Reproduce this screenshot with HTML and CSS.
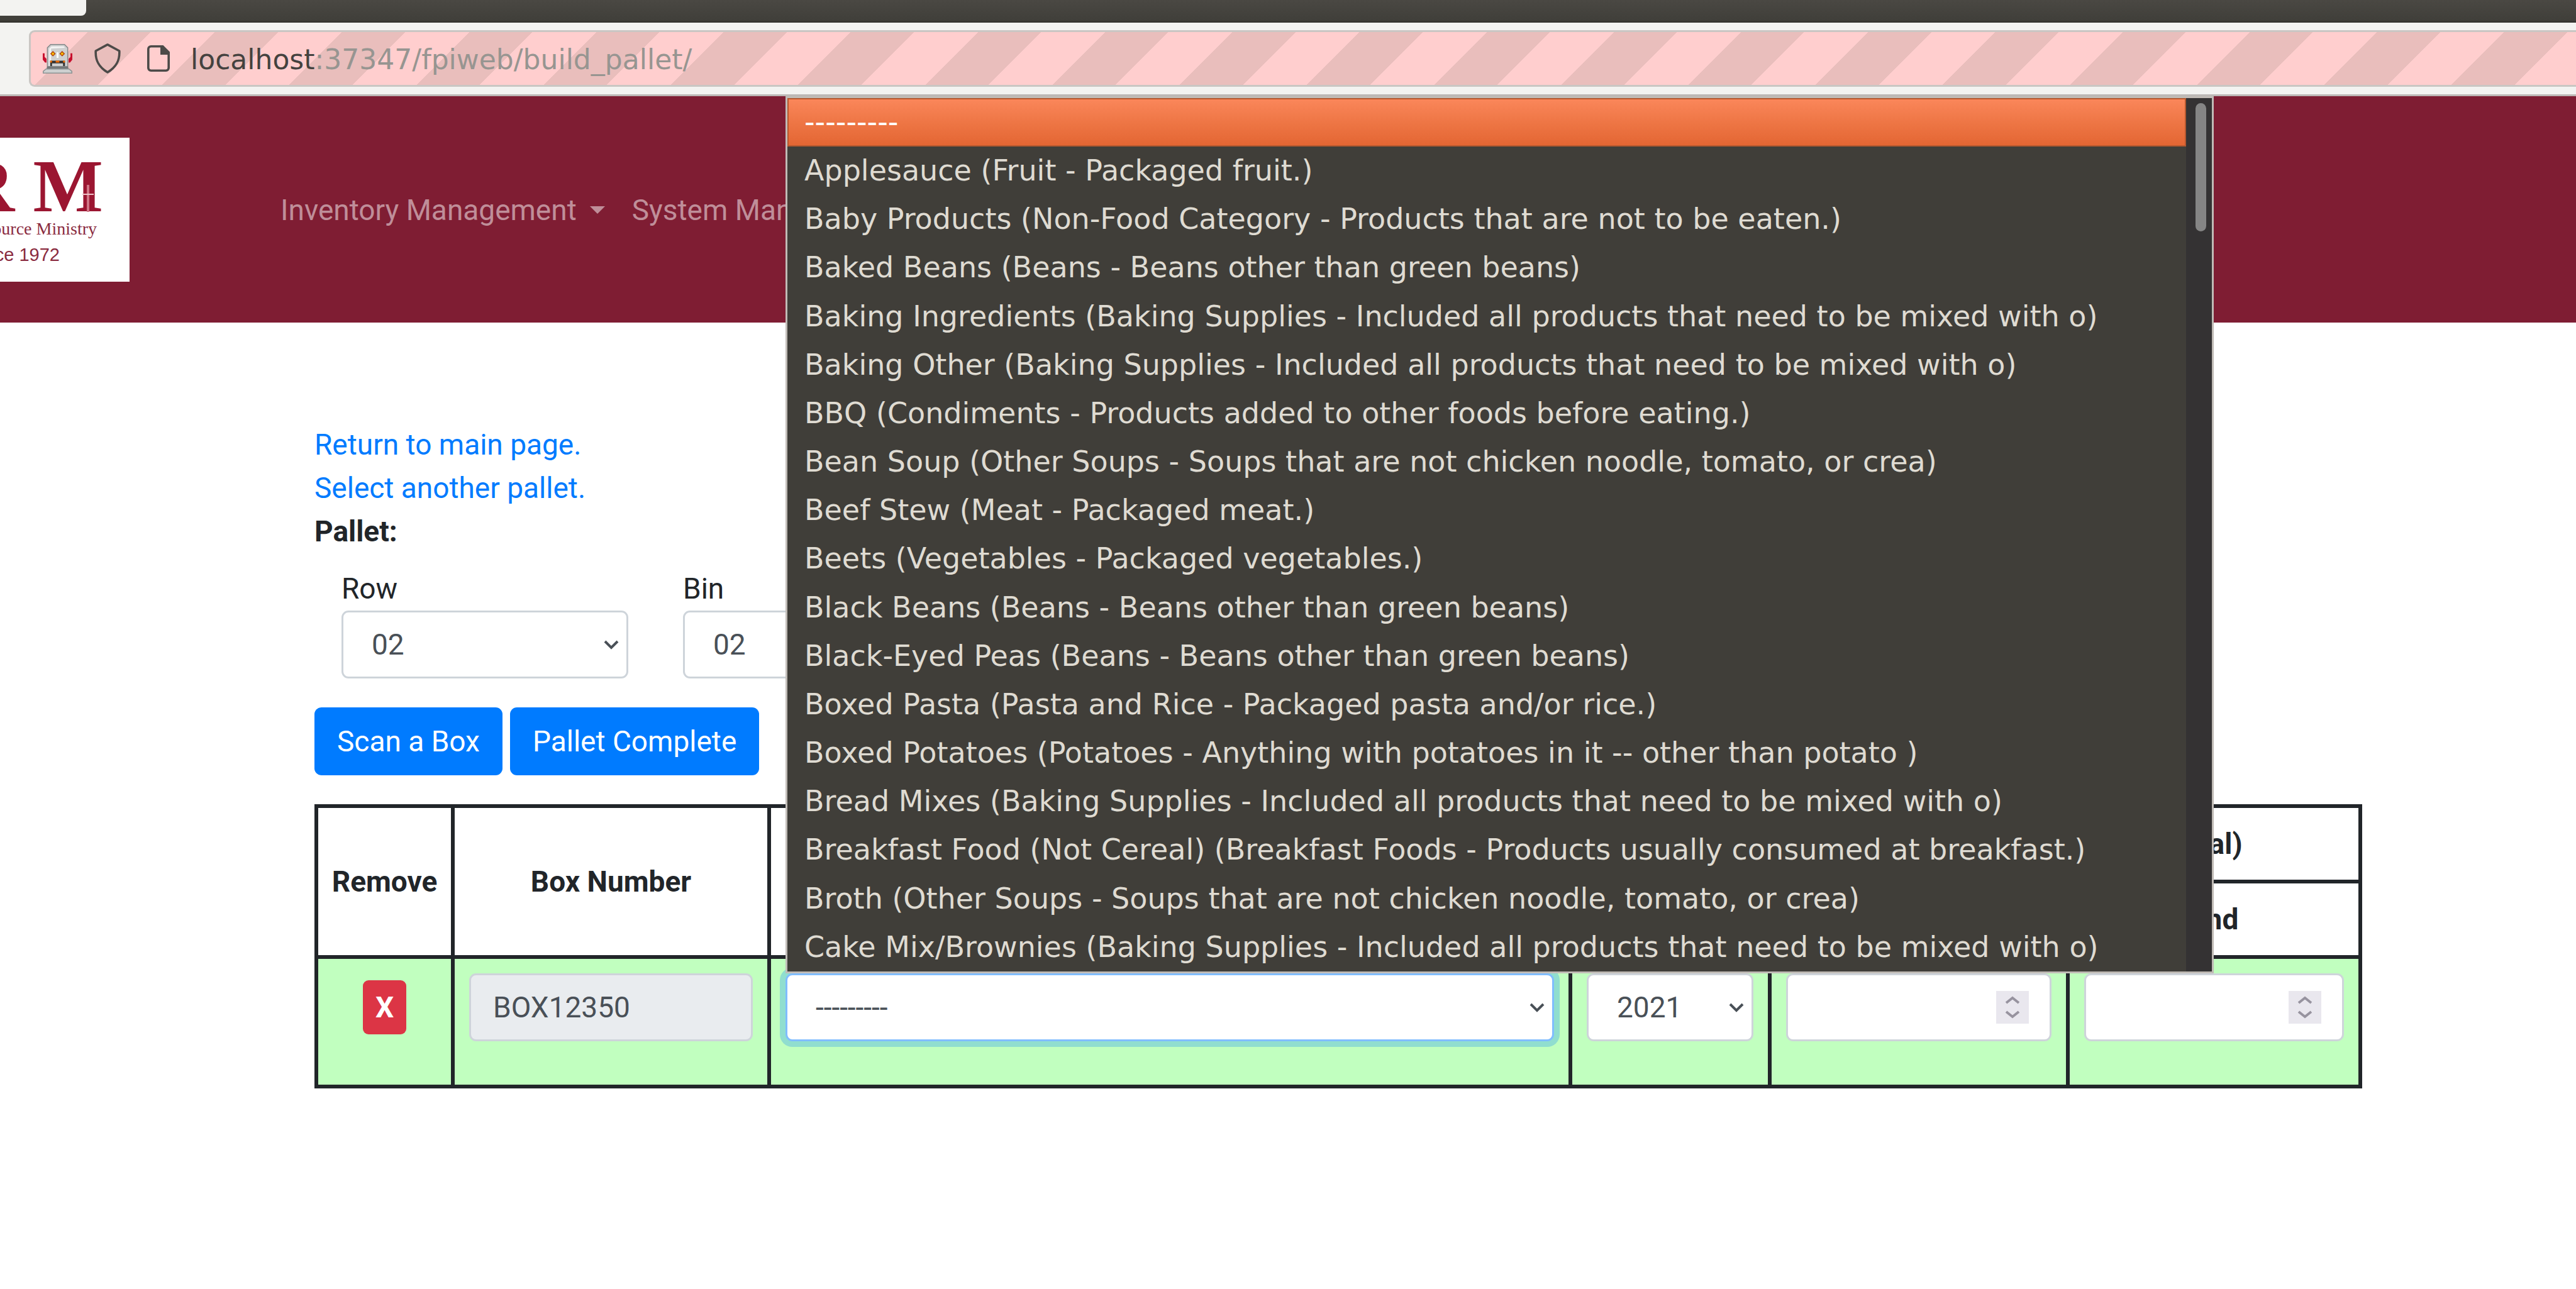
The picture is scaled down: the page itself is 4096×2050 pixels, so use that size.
FILE: index.html
```html
<!DOCTYPE html>
<html lang="en">
<head>
<meta charset="utf-8">
<title>Build Pallet</title>
<link rel="stylesheet" href="styles.css">
</head>
<body>
<div class="tabstrip"><div class="tab"></div></div>
<div class="toolbar">
  <div class="urlbar">
    <svg class="robot" viewBox="0 0 32 32" aria-hidden="true">
      <path d="M0 10h2v4l2 2v4H2.500L0 17zM32 10h-2v4l-2 2v4h1.500L32 17z" fill="#c8102e"/>
      <path d="M8.500.5h15l3.500 3.500v22H5V4z" fill="#cfd0d0" stroke="#85898a"/>
      <path d="M7 5l2.500-2.500h13L24 4l-15 1v19H7z" fill="#f3f3f3"/>
      <path d="M11 7.500l3 3-3 3-3-3zM21 7.500l3 3-3 3-3-3z" fill="#b3480c"/>
      <circle cx="11" cy="10.500" r="1.300" fill="#fcc000"/><circle cx="21" cy="10.500" r="1.300" fill="#fcc000"/>
      <path d="M15 9h2v6h-2z" fill="#fff"/>
      <path d="M8 18h16v6h-2v-3H10v3H8z" fill="#333"/>
      <path d="M8 18h2v2H8zM14 18h4v2h-4zM22 18h2v2h-2z" fill="#f06a00"/>
      <path d="M5 24h22l1 3H4z" fill="#747778"/>
      <path d="M3.500 27h25l3 2.500v2H.5v-2z" fill="#cdd0d0" stroke="#8d9393"/>
    </svg>
    <svg class="shield" viewBox="0 0 28 32" aria-hidden="true"><path d="M14 1.300L26.500 8c.6 10-3 17-12.500 22.700C4.500 25 .9 18 1.500 8z" fill="none" stroke="#4c4a48" stroke-width="2.400" stroke-linejoin="round"/></svg>
    <svg class="doc" viewBox="0 0 24 28" aria-hidden="true"><path d="M4 1.200h12.500l6.300 6.300V24a2.800 2.800 0 0 1-2.800 2.800H4A2.800 2.800 0 0 1 1.200 24V4A2.800 2.800 0 0 1 4 1.200z" fill="none" stroke="#4c4a48" stroke-width="2.400"/><path d="M14 1h3l6 6v3h-9z" fill="#4c4a48"/></svg>
    <span class="url">localhost<span class="url-rest">:37347/fpiweb/build_pallet/</span></span>
  </div>
</div>

<header class="navbar">
  <a class="logo" href="#" aria-label="Food Resource Ministry">
    <span class="logo-letters">F R M</span>
    <span class="logo-name">Food Resource Ministry</span>
    <span class="logo-since">Since 1972</span>
    <svg class="logo-cross" viewBox="0 0 20 43" aria-hidden="true"><path d="M10 0v43" stroke="#cf7484" stroke-width="4"/><path d="M1 15h18" stroke="#eec3ca" stroke-width="2"/></svg>
  </a>
  <nav class="nav">
    <a href="#">Inventory Management<i class="caret"></i></a>
    <a href="#">System Management<i class="caret"></i></a>
  </nav>
</header>

<main class="page">
  <div class="links">
    <a href="#">Return to main page.</a>
    <a href="#">Select another pallet.</a>
    <strong>Pallet:</strong>
  </div>
  <form class="location">
    <div class="field"><label for="row">Row</label><select class="control" id="row"><option>02</option></select></div>
    <div class="field"><label for="bin">Bin</label><select class="control" id="bin"><option>02</option></select></div>
  </form>
  <div class="actions">
    <button class="btn" type="button">Scan a Box</button>
    <button class="btn" type="button">Pallet Complete</button>
  </div>
  <table class="boxes">
    <colgroup><col class="c-remove"><col class="c-number"><col class="c-product"><col class="c-year"><col class="c-start"><col class="c-end"></colgroup>
    <thead>
      <tr><th rowspan="2">Remove</th><th rowspan="2">Box Number</th><th rowspan="2">Product</th><th rowspan="2">Exp Year</th><th colspan="2">Expiration Month (optional)</th></tr>
      <tr><th>Start</th><th>End</th></tr>
    </thead>
    <tbody>
      <tr>
        <td><div class="remove"><button class="btn-remove" type="button">X</button></div></td>
        <td><input class="control" type="text" value="BOX12350" aria-label="Box Number" disabled></td>
        <td><select class="control focused" aria-label="Product"><option>---------</option></select></td>
        <td><select class="control" aria-label="Exp Year"><option>2021</option></select></td>
        <td><div class="number"><input class="control" type="number" aria-label="Start month"><svg class="spin" viewBox="0 0 52 52" aria-hidden="true"><path d="M16 19l10-8 10 8M16 33l10 8 10-8"/></svg></div></td>
        <td><div class="number"><input class="control" type="number" aria-label="End month"><svg class="spin" viewBox="0 0 52 52" aria-hidden="true"><path d="M16 19l10-8 10 8M16 33l10 8 10-8"/></svg></div></td>
      </tr>
    </tbody>
  </table>
</main>

<div class="popup">
  <ul class="options" role="listbox" aria-label="Product">
    <li class="selected" role="option" aria-selected="true">---------</li>
    <li role="option">Applesauce (Fruit - Packaged fruit.)</li>
    <li role="option">Baby Products (Non-Food Category - Products that are not to be eaten.)</li>
    <li role="option">Baked Beans (Beans - Beans other than green beans)</li>
    <li role="option">Baking Ingredients (Baking Supplies - Included all products that need to be mixed with o)</li>
    <li role="option">Baking Other (Baking Supplies - Included all products that need to be mixed with o)</li>
    <li role="option">BBQ (Condiments - Products added to other foods before eating.)</li>
    <li role="option">Bean Soup (Other Soups - Soups that are not chicken noodle, tomato, or crea)</li>
    <li role="option">Beef Stew (Meat - Packaged meat.)</li>
    <li role="option">Beets (Vegetables - Packaged vegetables.)</li>
    <li role="option">Black Beans (Beans - Beans other than green beans)</li>
    <li role="option">Black-Eyed Peas (Beans - Beans other than green beans)</li>
    <li role="option">Boxed Pasta (Pasta and Rice - Packaged pasta and/or rice.)</li>
    <li role="option">Boxed Potatoes (Potatoes - Anything with potatoes in it -- other than potato )</li>
    <li role="option">Bread Mixes (Baking Supplies - Included all products that need to be mixed with o)</li>
    <li role="option">Breakfast Food (Not Cereal) (Breakfast Foods - Products usually consumed at breakfast.)</li>
    <li role="option">Broth (Other Soups - Soups that are not chicken noodle, tomato, or crea)</li>
    <li role="option">Cake Mix/Brownies (Baking Supplies - Included all products that need to be mixed with o)</li>
  </ul>
  <div class="scrollbar"><div class="thumb"></div></div>
</div>
</body>
</html>
```
FILE: styles.css
```css
* { box-sizing: border-box; }

body {
  margin: 0;
  position: relative;
  min-height: 100vh;
  overflow: hidden;
  background: #fff;
  color: #212529;
  font: 46px/69px Roboto, "Liberation Sans", sans-serif;
}

a { color: #007bff; text-decoration: none; }

/* Browser chrome */
.tabstrip {
  height: 36px;
  background: linear-gradient(#4a4843, #403f3a 32px, #2f2e2a);
}
.tab {
  width: 137px;
  height: 25px;
  background: #f3f3f1;
  border-radius: 0 0 8px 0;
}
.toolbar {
  padding: 12px 0 12px 46px;
  background: #f3f3f1;
  border-bottom: 3px solid #bcb8b5;
}
.urlbar {
  display: flex;
  align-items: center;
  height: 90px;
  padding-left: 19px;
  border: 3px solid #cac6c3;
  border-right: 0;
  border-radius: 9px 0 0 9px;
  background: repeating-linear-gradient(135deg, #ffcece 0 64px, #e9bebc 64px 135px, #ffcece 135px 143px);
}
.robot { width: 47px; height: 47px; margin-right: 35px; }
.shield { width: 42px; height: 48px; margin-right: 42px; }
.doc { width: 36px; height: 42px; margin-right: 33px; }
.url {
  padding-top: 4px;
  color: #44423f;
  font: 44px/80px "DejaVu Sans", sans-serif;
}
.url-rest { color: #979591; }

/* Site header */
.navbar {
  display: flex;
  align-items: center;
  height: 360px;
  background: #7f1d33;
}
.logo {
  position: relative;
  display: flex;
  flex-direction: column;
  align-items: flex-end;
  width: 206px;
  height: 229px;
  padding-top: 30px;
  overflow: hidden;
  background: #fff;
  color: #8a2b40;
  white-space: nowrap;
}
.logo-letters {
  padding-right: 42px;
  color: #9b1631;
  font: bold 118px/96px "Liberation Serif", serif;
}
.logo-name {
  padding-right: 52px;
  font: 28px/38px "Liberation Serif", serif;
}
.logo-since {
  padding-right: 111px;
  font: 29px/44px "Liberation Sans", sans-serif;
}
.logo-cross {
  position: absolute;
  left: 130px;
  top: 75px;
  width: 20px;
  height: 43px;
}
.nav {
  display: flex;
  gap: 43px;
  padding: 2px 0 0 240px;
}
.nav a {
  display: flex;
  align-items: center;
  gap: 21px;
  color: #bf8e99;
  white-space: nowrap;
}
.caret {
  border: 12px solid transparent;
  border-top-color: #bf8e99;
  border-bottom: 0;
}

/* Page */
.page { padding: 160px 340px 0 500px; }
.links {
  display: flex;
  flex-direction: column;
  align-items: flex-start;
}
.links strong { font-weight: 700; }
.location {
  display: grid;
  grid-template-columns: repeat(2, 456px);
  gap: 87px;
  padding: 22px 43px 0;
}
.field { display: flex; flex-direction: column; }
.actions {
  display: flex;
  gap: 12px;
  padding: 46px 0;
}
.btn {
  height: 108px;
  padding: 0 36px;
  border: 0;
  border-radius: 11px;
  background: #007bff;
  color: #fff;
  font: inherit;
}

.control {
  display: block;
  width: 100%;
  height: 108px;
  padding: 0 35px;
  border: 3px solid #ced4da;
  border-radius: 11px;
  background: #fff;
  color: #495057;
  font: inherit;
  appearance: none;
}
input.control:disabled { background: #e9ecef; }
select.control {
  padding: 0 45px;
  background: #fff url("data:image/svg+xml,%3Csvg xmlns='http://www.w3.org/2000/svg' viewBox='0 0 24 16'%3E%3Cpath d='M2 3l10 10L22 3' fill='none' stroke='%23495057' stroke-width='4'/%3E%3C/svg%3E") no-repeat right 12px center / 24px 16px;
}
.control.focused {
  border-color: #80bdff;
  box-shadow: 0 0 0 9px rgba(0, 123, 255, .25);
}

.boxes {
  width: 100%;
  table-layout: fixed;
  border-collapse: collapse;
}
.c-remove { width: 217px; }
.c-number { width: 503px; }
.c-product { width: 1274px; }
.c-year { width: 317px; }
.c-start { width: 474px; }
.boxes th, .boxes td { border: 6px solid #212529; }
.boxes th {
  height: 120px;
  padding: 0;
  font-weight: 700;
}
.boxes td {
  padding: 23px 23px 69px;
  background: #c1ffbf;
  vertical-align: top;
}
.remove {
  display: flex;
  align-items: center;
  justify-content: center;
  height: 108px;
}
.btn-remove {
  width: 69px;
  height: 86px;
  padding: 0;
  border: 0;
  border-radius: 9px;
  background: #dc3545;
  color: #fff;
  font: inherit;
  font-weight: 700;
}
.number { position: relative; }
.number input::-webkit-inner-spin-button { appearance: none; }
.spin {
  position: absolute;
  right: 36px;
  top: 28px;
  width: 52px;
  height: 52px;
  background: #e9e7ee;
  fill: none;
  stroke: #97939f;
  stroke-width: 4;
}

/* Open product list */
.popup {
  position: absolute;
  left: 1249px;
  top: 153px;
  display: flex;
  width: 2271px;
  height: 1395px;
  border: 3px solid #c0bbb6;
  background: #403e39;
}
.options {
  flex: 1;
  display: grid;
  grid-template-rows: repeat(18, 1fr);
  margin: 0;
  padding: 0;
  list-style: none;
  color: #dfdbd2;
  font: 46px/77px "DejaVu Sans", sans-serif;
}
.options li { padding-left: 27px; white-space: nowrap; }
.options .selected {
  background: linear-gradient(#fb875b, #ee7645 50%, #e36532);
  box-shadow: inset 0 0 0 2px #b5582f;
  color: #fff;
}
.scrollbar {
  width: 41px;
  padding: 8px 9px 0 15px;
  background: #343233;
}
.thumb {
  height: 204px;
  border-radius: 9px;
  background: #858585;
}
```
